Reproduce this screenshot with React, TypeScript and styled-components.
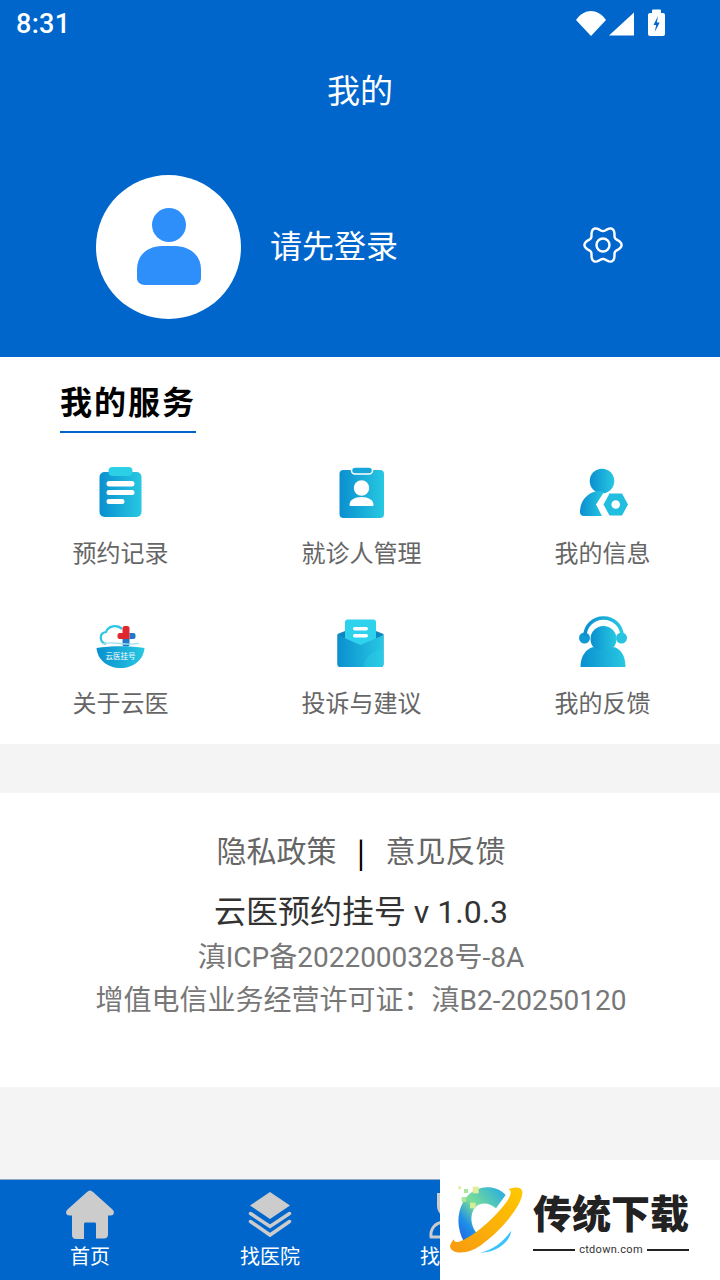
import React from "react";
import styled, { createGlobalStyle } from "styled-components";

const Global = createGlobalStyle`
  html, body { margin: 0; padding: 0; background: #f4f4f4; }
  * { box-sizing: border-box; }
  body { font-family: Roboto, "Noto Sans CJK SC", sans-serif; }
`;

const Page = styled.div`
  position: relative;
  width: 720px;
  height: 1280px;
  display: flex;
  flex-direction: column;
  background: #f4f4f4;
  overflow: hidden;
`;
const Header = styled.header`
  height: 357px;
  background: #0066cc;
  color: #fff;
  display: flex;
  flex-direction: column;
`;
const StatusBar = styled.div`
  height: 48px;
  padding: 0 52px 0 16px;
  display: flex;
  align-items: center;
  justify-content: space-between;
`;
const Clock = styled.span`
  font: 500 27px/48px Roboto, sans-serif;
  letter-spacing: 0.3px;
`;
const StatusIcons = styled.div`
  display: flex;
  align-items: center;
  height: 48px;
`;
const Title = styled.h1`
  margin: 0;
  height: 86px;
  padding-top: 18px;
  text-align: center;
  font: 400 33px/46px "Noto Sans CJK SC", sans-serif;
`;
const Profile = styled.div`
  display: flex;
  align-items: center;
  padding: 41px 0 0 96px;
`;
const Avatar = styled.div`
  width: 145px;
  height: 144px;
  border-radius: 50%;
  background: #fff;
  display: flex;
  align-items: center;
  justify-content: center;
  flex: none;
`;
const LoginText = styled.div`
  margin-left: 29px;
  margin-top: -6px;
  width: 313px;
  font: 400 32px/46px "Noto Sans CJK SC", sans-serif;
`;
const Gear = styled.svg`
  width: 40px;
  height: 40px;
  margin-top: -4px;
`;
const Services = styled.section`
  height: 387px;
  background: #fff;
  padding-top: 20px;
`;
const SectionHead = styled.div`
  margin-left: 60px;
  width: 136px;
  height: 56px;
  border-bottom: 2px solid #0066cc;
  color: #000;
  font: 700 32px/46px "Noto Sans CJK SC", sans-serif;
  letter-spacing: 2px;
  white-space: nowrap;
`;
const Grid = styled.div`
  display: grid;
  grid-template-columns: repeat(3, 241px);
  grid-auto-rows: 150px;
  padding-top: 33px;
`;
const Cell = styled.div`
  display: flex;
  flex-direction: column;
  align-items: center;
`;
const CellIcon = styled.svg`
  width: 56px;
  height: 56px;
  display: block;
`;
const CellLabel = styled.span`
  margin-top: 12px;
  color: #666;
  font: 400 24px/36px "Noto Sans CJK SC", sans-serif;
`;
const Footer = styled.section`
  margin-top: 49px;
  height: 294px;
  background: #fff;
  padding: 34px 0 0 2px;
  display: flex;
  flex-direction: column;
  align-items: center;
`;
const Links = styled.div`
  display: flex;
  align-items: center;
  height: 44px;
  color: #666;
  font: 400 30px/44px "Noto Sans CJK SC", sans-serif;
`;
const Divider = styled.span`
  width: 49px;
  padding-top: 3px;
  text-align: center;
  color: #000;
  font: 500 28px/44px "Noto Sans CJK SC", sans-serif;
`;
const Version = styled.div`
  margin-top: 18px;
  color: #333;
  font: 400 32px/46px Roboto, "Noto Sans CJK SC", sans-serif;
`;
const Legal = styled.div`
  color: #777;
  font: 400 28px/43px Roboto, "Noto Sans CJK SC", sans-serif;
  white-space: nowrap;
  &:first-of-type { margin-top: 1px; }
`;
const LegalFirst = styled(Legal)`
  margin-top: 1px;
`;
const TabBar = styled.nav`
  margin-top: auto;
  height: 101px;
  background: #0066cc;
  border-top: 1px solid #8fa9c6;
  display: grid;
  grid-template-columns: repeat(4, 180px);
`;
const Tab = styled.div`
  display: flex;
  flex-direction: column;
  align-items: center;
  padding-top: 9px;
`;
const TabIcon = styled.svg`
  width: 52px;
  height: 52px;
  display: block;
`;
const TabLabel = styled.span`
  color: #fff;
  font: 400 20px/30px "Noto Sans CJK SC", sans-serif;
`;
const Watermark = styled.div`
  position: absolute;
  right: 0;
  bottom: 0;
  width: 280px;
  height: 120px;
  background: #fff;
`;
const WmLogo = styled.svg`
  position: absolute;
  left: 5px;
  top: 20px;
  width: 90px;
  height: 90px;
`;
const WmName = styled.div`
  position: absolute;
  left: 93px;
  top: 24px;
  color: #222;
  font: 900 39px/54px "Noto Sans CJK SC", sans-serif;
  white-space: nowrap;
`;
const WmSub = styled.div`
  position: absolute;
  left: 93px;
  top: 82px;
  width: 156px;
  display: flex;
  align-items: center;
  gap: 4px;
  color: #333;
  font: 400 11px/16px Roboto, sans-serif;
  letter-spacing: 0.3px;
  &::before, &::after {
    content: "";
    flex: 1;
    height: 2px;
    background: #222;
  }
`;

const Grad = ({ id }: { id: string }) => (
  <defs>
    <linearGradient id={id} x1="0" y1="0" x2="1" y2="0">
      <stop offset="0" stopColor="#0a8fcf" />
      <stop offset="1" stopColor="#28c8e2" />
    </linearGradient>
  </defs>
);

const Svc = ({ label, children }: { label: string; children: React.ReactNode }) => (
  <Cell>
    <CellIcon viewBox="0 0 56 56">{children}</CellIcon>
    <CellLabel>{label}</CellLabel>
  </Cell>
);

const gearPath = (() => {
  const pts: string[] = [];
  for (let a = 0; a < 360; a += 5) {
    const t = (a * Math.PI) / 180;
    const r = 16.2 + 2.4 * Math.cos(6 * t);
    pts.push(`${(20 + r * Math.cos(t)).toFixed(2)} ${(20 + r * Math.sin(t)).toFixed(2)}`);
  }
  return `M${pts.join("L")}Z`;
})();

export default function App() {
  return (
    <Page>
      <Global />
      <Header>
        <StatusBar>
          <Clock>8:31</Clock>
          <StatusIcons>
            <svg width="92" height="48" viewBox="0 0 92 48">
              <path d="M0 20C4 14 10 11 15 11s11 3 15 9L15 36z" fill="#fff" />
              <path d="M33 35.500L58 12.500V35.500z" fill="#fff" />
              <rect x="72" y="13" width="17" height="23" rx="2" fill="#fff" />
              <rect x="76" y="9.500" width="9" height="4" rx="1" fill="#fff" />
              <path d="M82 16l-4.500 9h2.700l-1.500 7 5-9.500h-2.900z" fill="#0066cc" />
            </svg>
          </StatusIcons>
        </StatusBar>
        <Title>我的</Title>
        <Profile>
          <Avatar>
            <svg width="66" height="80" viewBox="0 0 66 80">
              <circle cx="33" cy="18" r="17" fill="#2e8ffb" />
              <path d="M1 62c0-14 11-23 25-23h13c14 0 26 9 26 23v9c0 4-3 7-7 7H9c-5 0-8-3-8-7z" fill="#2e8ffb" />
            </svg>
          </Avatar>
          <LoginText>请先登录</LoginText>
          <Gear viewBox="0 0 40 40" fill="none" stroke="#fff" strokeWidth="2.400" strokeLinejoin="round">
            <path d={gearPath} />
            <circle cx="20" cy="20" r="6.500" />
          </Gear>
        </Profile>
      </Header>

      <Services>
        <SectionHead>我的服务</SectionHead>
        <Grid>
          <Svc label="预约记录">
            <Grad id="g1" />
            <rect x="6.500" y="6" width="42" height="45" rx="5" fill="url(#g1)" />
            <rect x="15.500" y="1" width="24" height="9" rx="4" fill="#2cd0e6" />
            <rect x="13.500" y="15" width="28" height="5.500" rx="2.700" fill="#fff" />
            <rect x="13.500" y="24" width="28" height="5" rx="2.500" fill="#fff" />
            <rect x="13.500" y="33" width="18" height="5" rx="2.500" fill="#fff" />
          </Svc>
          <Svc label="就诊人管理">
            <Grad id="g2" />
            <rect x="5.500" y="4" width="44.500" height="48" rx="4" fill="url(#g2)" />
            <rect x="17.500" y="1" width="21" height="7" rx="3.500" fill="#18a5d8" stroke="#fff" strokeWidth="1.500" />
            <circle cx="27.500" cy="22" r="7.700" fill="#fff" />
            <path d="M15.500 39c0-5 5-8 12-8s12 3 12 8c0 .7-.5 1-1.500 1H17c-1 0-1.500-.3-1.500-1z" fill="#fff" />
          </Svc>
          <Svc label="我的信息">
            <Grad id="g3" />
            <circle cx="27" cy="15" r="12.300" fill="url(#g3)" />
            <path d="M5 46c0-11 7-19 17-21l7 1-8 12.500 6 11.500H9c-3 0-4-2-4-4z" fill="url(#g3)" />
            <path d="M34.500 27.500H47l6 11-6 11H34.500l-6-11z" fill="#22bedf" />
            <circle cx="40.700" cy="38.500" r="4.300" fill="#fff" />
          </Svc>
          <Svc label="关于云医">
            <Grad id="g4" />
            <path d="M13 28c-7-2-7-11 0-12 2-6 11-8 16-3" fill="none" stroke="#2cc6e4" strokeWidth="2.200" />
            <path d="M29.500 22.500h7v6c0 1-1 2-2 2h-3c-1 0-2-1-2-2z" fill="#1f78c8" />
            <path d="M36.500 17h4c1.200 0 2 .8 2 2v2c0 1-.8 2-2 2h-4z" fill="#1f78c8" />
            <path d="M31.500 10h3c1 0 2 1 2 2v11h-10c-1 0-2-1-2-2v-2c0-1 1-2 2-2h3v-5c0-1 1-2 2-2z" fill="#e0282e" />
            <path d="M9 28c12-4 24 3 37-1" fill="none" stroke="#9fe0f0" strokeWidth="1.300" />
            <path d="M3.500 32c14-2.500 34-2.500 48 0-1 12-11 20-24 20S4.500 44 3.500 32z" fill="url(#g4)" />
            <text x="27.500" y="43" textAnchor="middle" fontSize="7.500" fill="#fff" fontFamily="Noto Sans CJK SC, sans-serif">云医挂号</text>
          </Svc>
          <Svc label="投诉与建议">
            <Grad id="g5" />
            <path d="M3.500 18l10-4h26l10 4v30c0 2-1 3-3 3h-40c-2 0-3-1-3-3z" fill="#0f86bd" />
            <path d="M11 6c0-1.500 1-2.500 2.500-2.500h26c1.500 0 2.500 1 2.500 2.500v22l-15.500 5L11 28z" fill="#2fd2ec" />
            <rect x="19" y="11" width="15" height="3.500" rx="1.700" fill="#fff" />
            <rect x="19" y="18" width="15" height="3.500" rx="1.700" fill="#fff" />
            <path d="M3.500 19l23 10 23-10v29c0 2-1 3-3 3h-40c-2 0-3-1-3-3z" fill="url(#g5)" />
            <path d="M30 51c0-9 8-17 19.500-18v15c0 2-1 3-3 3z" fill="#2fd2ec" opacity="0.35" />
          </Svc>
          <Svc label="我的反馈">
            <Grad id="g6" />
            <circle cx="9.500" cy="22" r="5.500" fill="#1199d3" />
            <circle cx="46.500" cy="22" r="5.500" fill="#27c3e0" />
            <path d="M10 20C10 10 18 2 28.500 2S47 10 47 20" fill="none" stroke="url(#g6)" strokeWidth="3.500" />
            <circle cx="28.500" cy="23" r="13" fill="url(#g6)" />
            <path d="M5.500 51c0-11 5.500-18 12.500-20 6 4.500 15 4.500 21 0 7 2 11.500 9 11.500 20z" fill="url(#g6)" />
          </Svc>
        </Grid>
      </Services>

      <Footer>
        <Links>
          <span>隐私政策</span>
          <Divider>|</Divider>
          <span>意见反馈</span>
        </Links>
        <Version>云医预约挂号 v 1.0.3</Version>
        <LegalFirst>滇ICP备2022000328号-8A</LegalFirst>
        <Legal>增值电信业务经营许可证：滇B2-20250120</Legal>
      </Footer>

      <TabBar>
        <Tab>
          <TabIcon viewBox="0 0 52 52">
            <path d="M26 1.500c1 0 2 .5 3 1.500l19.500 17.500c2.500 2.500 1.500 6-2 6H44v19c0 2.500-1.500 4-4 4h-8V35c0-1-.5-1.500-1.500-1.500h-9c-1 0-1.500.5-1.500 1.500v15h-8c-2.500 0-4-1.500-4-4V26.500H5.500c-3.500 0-4.500-3.500-2-6L23 3c1-1 2-1.500 3-1.500z" fill="#ccc" />
          </TabIcon>
          <TabLabel>首页</TabLabel>
        </Tab>
        <Tab>
          <TabIcon viewBox="0 0 52 52">
            <path d="M26 3l20 13.500L26 30 6 16.500z" fill="#ccc" />
            <path d="M6.500 24.500L26 37.500l19.500-13" fill="none" stroke="#ccc" strokeWidth="3.500" strokeLinecap="round" />
            <path d="M6.500 32.500L26 46l19.500-13.500" fill="none" stroke="#ccc" strokeWidth="3.500" strokeLinecap="round" />
          </TabIcon>
          <TabLabel>找医院</TabLabel>
        </Tab>
        <Tab>
          <TabIcon viewBox="0 0 52 52">
            <path d="M13 4h26v13c0 7-6 12-13 12s-13-5-13-12z" fill="#ccc" />
            <path d="M7 48c-1-8 4-14 12-15M45 48c1-8-4-14-12-15M7 48h38" fill="none" stroke="#ccc" strokeWidth="3" strokeLinecap="round" />
          </TabIcon>
          <TabLabel>找医生</TabLabel>
        </Tab>
      </TabBar>

      <Watermark>
        <WmLogo viewBox="15 60 270 270">
          <defs>
            <linearGradient id="wa" x1="0" y1="1" x2="1" y2="0">
              <stop offset="0" stopColor="#1f5fe8" />
              <stop offset="0.25" stopColor="#1f8fe8" />
              <stop offset="0.5" stopColor="#7ade96" />
              <stop offset="1" stopColor="#1fa8e8" />
            </linearGradient>
            <linearGradient id="wb" x1="0" y1="1" x2="1" y2="0">
              <stop offset="0" stopColor="#f79a10" />
              <stop offset="1" stopColor="#ffc800" />
            </linearGradient>
          </defs>
          <path d="M150 82C120 78 85 95 70 125C50 160 50 205 72 245L115 225C95 205 88 175 100 150C110 130 140 120 168 145L197 105C185 92 170 85 150 82Z" fill="url(#wa)" />
          <path d="M30 260C35 285 90 285 130 250C190 205 250 130 247 95C245 80 225 80 205 88C215 90 215 105 200 125C170 165 120 215 70 240C55 247 42 250 42 238C36 244 31 252 30 260Z" fill="url(#wb)" />
          <path d="M120 278C160 270 195 240 213 212C213 240 175 278 120 278Z" fill="#3cc4fa" />
          <rect x="55" y="79" width="8" height="9" fill="#e2ee9a" />
          <rect x="72" y="87" width="12" height="12" fill="#a9e59a" />
          <rect x="98" y="80" width="18" height="20" fill="#e2ee9a" />
          <rect x="65" y="111" width="14" height="15" fill="#a9e59a" />
          <rect x="90" y="128" width="17" height="17" fill="#d0ee9a" />
        </WmLogo>
        <WmName>传统下载</WmName>
        <WmSub>ctdown.com</WmSub>
      </Watermark>
    </Page>
  );
}
